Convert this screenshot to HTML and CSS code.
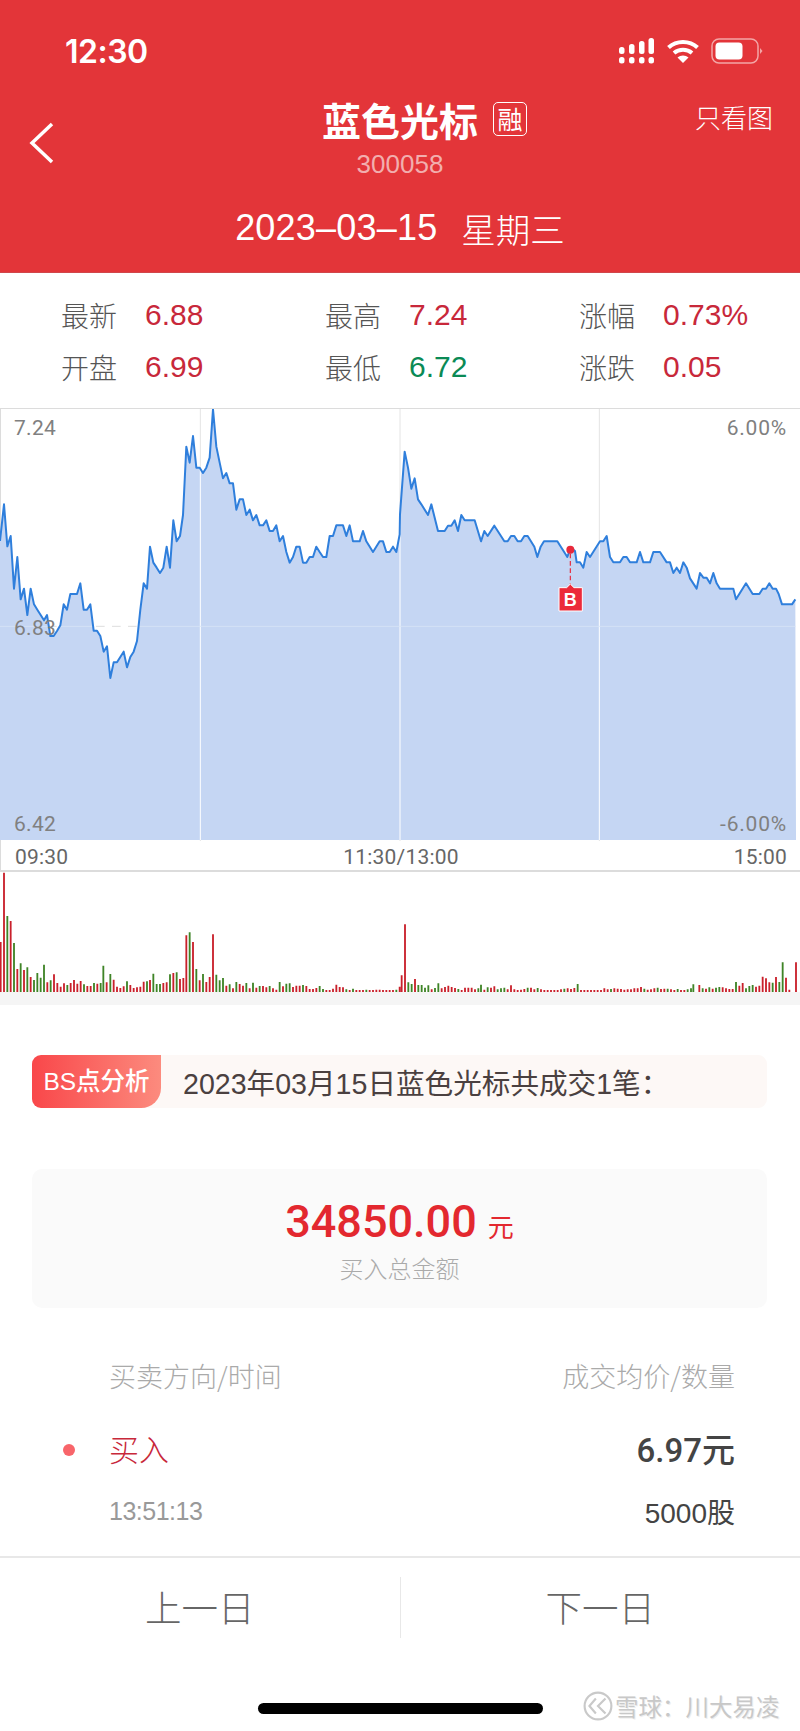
FILE: index.html
```html
<!DOCTYPE html>
<html lang="zh-CN">
	<head>
		<meta charset="utf8"/>
		<title>蓝色光标</title>
		<link rel="stylesheet" href="styles.css">
	</head>
	<body>
		<div class="page">
			<header class="top">
				<div class="status">
					<span class="clock">12:30</span>
					<div class="status-icons">
						<svg class="signal" width="36" height="26" viewBox="0 0 36 26" fill="#fff">
							<rect x="0" y="9" width="5.5" height="7" rx="2.5"/>
							<rect x="10" y="6" width="5.5" height="10" rx="2.5"/>
							<rect x="20" y="3" width="5.5" height="13" rx="2.5"/>
							<rect x="29.5" y="0" width="5.5" height="16" rx="2.5"/>
							<rect x="0" y="19" width="5.5" height="6.5" rx="2.5"/>
							<rect x="10" y="19" width="5.5" height="6.5" rx="2.5"/>
							<rect x="20" y="19" width="5.5" height="6.5" rx="2.5"/>
							<rect x="29.5" y="19" width="5.5" height="6.5" rx="2.5"/>
						</svg>
						<svg class="wifi" width="34" height="24" viewBox="0 0 34 24">
							<path d="M2.5 8.5C10.5 1 23.500 1 31.500 8.500" fill="none" stroke="#fff" stroke-width="4"/>
							<path d="M8 14C13 9.800 21 9.800 26 14" fill="none" stroke="#fff" stroke-width="4"/>
							<path d="M17 24L11.500 18.500C14.500 15.800 19.500 15.800 22.500 18.500Z" fill="#fff"/>
						</svg>
						<svg class="battery" width="52" height="26" viewBox="0 0 52 26">
							<rect x="1" y="1" width="46" height="24" rx="7" fill="none" stroke="#f3a6a6" stroke-width="1.500"/>
							<rect x="4.500" y="4.500" width="27" height="17" rx="4" fill="#fff"/>
							<path d="M49 10L51.500 13L49 16Z" fill="#f3a6a6"/>
						</svg>
					</div>
				</div>
				<div class="nav">
					<svg class="back" width="26" height="42" viewBox="0 0 26 42">
						<path d="M23 2L3 21L23 40" fill="none" stroke="#fff" stroke-width="3.500"/>
					</svg>
					<div class="name-box">
						<h1 class="name">蓝色光标<span class="tag">融</span></h1>
						<div class="code">300058</div>
					</div>
					<a class="chart-only">只看图</a>
				</div>
				<div class="date"><span class="day">2023–03–15</span><span class="week">星期三</span></div>
			</header>

			<div class="stats">
				<div class="stat"><span class="label">最新</span><span class="up">6.88</span></div>
				<div class="stat"><span class="label">最高</span><span class="up">7.24</span></div>
				<div class="stat"><span class="label">涨幅</span><span class="up">0.73%</span></div>
				<div class="stat"><span class="label">开盘</span><span class="up">6.99</span></div>
				<div class="stat"><span class="label">最低</span><span class="down">6.72</span></div>
				<div class="stat"><span class="label">涨跌</span><span class="up">0.05</span></div>
			</div>

			<div class="chart">
				<svg class="price" width="800" height="432" viewBox="0 24 2400 1296">
					<defs>
						<clipPath id="areaClip"><polygon points="0,1317 0,420 12,310 22,436 32,405 42,563 52,468 62,595 72,563 82,642 92,563 102,610 112,626 122,642 132,658 141,642 151,705 161,705 171,690 181,673 191,610 201,626 211,579 231,579 241,547 251,626 261,626 271,610 281,689 291,689 301,705 311,752 321,736 331,831 341,784 351,784 361,768 371,752 381,799 391,768 401,752 411,720 421,626 431,547 441,563 450,437 460,485 470,500 480,516 490,500 500,437 510,500 520,358 530,421 540,405 549,342 559,137 569,185 579,105 589,200 599,200 609,216 619,200 629,170 639,25 649,137 659,185 669,232 679,216 689,247 699,247 709,326 719,295 729,295 739,342 749,326 759,358 769,342 779,373 789,373 799,358 809,390 819,390 829,373 839,421 849,405 859,453 869,485 879,468 889,437 899,437 909,485 919,485 929,468 939,468 949,437 959,453 969,468 979,468 989,405 999,405 1009,373 1029,373 1039,405 1049,373 1059,421 1079,421 1089,390 1099,421 1119,453 1139,421 1149,421 1159,453 1169,453 1179,437 1189,453 1199,400 1200,340 1214,152 1224,200 1234,263 1244,232 1254,295 1264,310 1284,342 1294,310 1314,390 1334,390 1344,374 1354,374 1364,358 1374,390 1384,342 1394,358 1424,358 1443,421 1453,390 1463,405 1483,374 1513,421 1523,421 1533,405 1543,405 1553,421 1563,421 1573,405 1583,405 1603,437 1612,468 1622,437 1632,421 1672,421 1702,468 1712,440 1725,450 1730,484 1740,484 1750,500 1760,453 1770,468 1800,421 1810,421 1820,405 1830,468 1840,484 1860,484 1870,468 1880,468 1890,484 1910,484 1920,453 1930,484 1950,484 1960,453 1980,453 2000,484 2010,484 2020,516 2030,500 2040,516 2050,484 2060,500 2070,532 2090,563 2100,516 2110,530 2120,530 2130,547 2140,516 2150,547 2160,563 2200,563 2208,595 2238,547 2258,579 2278,579 2288,563 2298,563 2308,547 2318,563 2328,563 2336,579 2346,610 2376,610 2386,595 2388,1317"/></clipPath>
					</defs>
					<!-- grid on white -->
					<path d="M601 24V1320M1200 24V1320M1798 24V1320" stroke="#e4e4e4" stroke-width="3" fill="none"/>
					<path d="M0 676H2400" stroke="#d6d6d6" stroke-width="2.500" stroke-dasharray="26 22" fill="none"/>
					<rect class="area" x="0" y="0" width="2400" height="1320" clip-path="url(#areaClip)"/>
					<!-- grid on the blue area -->
					<g clip-path="url(#areaClip)">
						<path d="M601 24V1320M1200 24V1320M1798 24V1320" stroke="#fff" stroke-width="3" fill="none"/>
						<path d="M0 676H2400" stroke="#d9e4f7" stroke-width="2.500" fill="none"/>
					</g>
					<polyline class="line" points="0,420 12,310 22,436 32,405 42,563 52,468 62,595 72,563 82,642 92,563 102,610 112,626 122,642 132,658 141,642 151,705 161,705 171,690 181,673 191,610 201,626 211,579 231,579 241,547 251,626 261,626 271,610 281,689 291,689 301,705 311,752 321,736 331,831 341,784 351,784 361,768 371,752 381,799 391,768 401,752 411,720 421,626 431,547 441,563 450,437 460,485 470,500 480,516 490,500 500,437 510,500 520,358 530,421 540,405 549,342 559,137 569,185 579,105 589,200 599,200 609,216 619,200 629,170 639,25 649,137 659,185 669,232 679,216 689,247 699,247 709,326 719,295 729,295 739,342 749,326 759,358 769,342 779,373 789,373 799,358 809,390 819,390 829,373 839,421 849,405 859,453 869,485 879,468 889,437 899,437 909,485 919,485 929,468 939,468 949,437 959,453 969,468 979,468 989,405 999,405 1009,373 1029,373 1039,405 1049,373 1059,421 1079,421 1089,390 1099,421 1119,453 1139,421 1149,421 1159,453 1169,453 1179,437 1189,453 1199,400 1200,340 1214,152 1224,200 1234,263 1244,232 1254,295 1264,310 1284,342 1294,310 1314,390 1334,390 1344,374 1354,374 1364,358 1374,390 1384,342 1394,358 1424,358 1443,421 1453,390 1463,405 1483,374 1513,421 1523,421 1533,405 1543,405 1553,421 1563,421 1573,405 1583,405 1603,437 1612,468 1622,437 1632,421 1672,421 1702,468 1712,440 1725,450 1730,484 1740,484 1750,500 1760,453 1770,468 1800,421 1810,421 1820,405 1830,468 1840,484 1860,484 1870,468 1880,468 1890,484 1910,484 1920,453 1930,484 1950,484 1960,453 1980,453 2000,484 2010,484 2020,516 2030,500 2040,516 2050,484 2060,500 2070,532 2090,563 2100,516 2110,530 2120,530 2130,547 2140,516 2150,547 2160,563 2200,563 2208,595 2238,547 2258,579 2278,579 2288,563 2298,563 2308,547 2318,563 2328,563 2336,579 2346,610 2376,610 2386,595"/>
					<!-- buy marker -->
					<path d="M1711 458V548" stroke="#e8293b" stroke-width="3.500" stroke-dasharray="14 8" fill="none"/>
					<circle cx="1711" cy="446" r="12" fill="#e8293b"/>
					<path d="M1677 560H1700L1711 549L1722 560H1747V630H1677Z" fill="#ec2a3a" stroke="#fff" stroke-width="3"/>
					<text class="marker-text" x="1711" y="615" text-anchor="middle">B</text>
				</svg>
				<span class="axis axis-tl">7.24</span>
				<span class="axis axis-ml">6.83</span>
				<span class="axis axis-bl">6.42</span>
				<span class="axis axis-tr">6.00%</span>
				<span class="axis axis-br">-6.00%</span>
			</div>

			<div class="times">
				<span>09:30</span><span>11:30/13:00</span><span>15:00</span>
			</div>

			<svg class="volume" width="800" height="120" viewBox="0 156 2400 360">
				<path class="vol-up" d="M2 516V366M12 516V158M32 516V303M52 516V447M72 516V450M92 516V471M142 516V487M162 516V463M172 516V489M182 516V500M192 516V490M212 516V489M222 516V480M232 516V491M242 516V483M262 516V498M272 516V498M292 516V491M320 516V487M341 516V479M351 516V500M361 516V504M371 516V499M391 516V495M401 516V504M411 516V502M421 516V500M431 516V485M450 516V480M490 516V489M500 516V487M520 516V459M540 516V477M550 516V474M559 516V346M579 516V366M599 516V481M619 516V486M629 516V471M639 516V343M679 516V497M699 516V505M719 516V492M729 516V497M749 516V505M769 516V503M789 516V498M799 516V502M819 516V505M829 516V509M849 516V499M879 516V501M889 516V497M899 516V497M919 516V498M929 516V507M939 516V507M949 516V504M979 516V510M989 516V510M999 516V506M1009 516V494M1019 516V501M1029 516V502M1049 516V510M1069 516V510M1079 516V510M1089 516V510M1109 516V510M1119 516V510M1129 516V509M1139 516V509M1149 516V510M1159 516V510M1169 516V510M1179 516V510M1199 516V500M1205 516V466M1215 516V313M1245 516V477M1295 516V508M1325 516V505M1335 516V501M1345 516V497M1355 516V501M1365 516V504M1385 516V510M1395 516V503M1405 516V503M1415 516V503M1425 516V508M1453 516V509M1473 516V503M1483 516V499M1523 516V508M1533 516V496M1543 516V508M1553 516V510M1563 516V509M1573 516V507M1593 516V503M1603 516V508M1623 516V508M1633 516V510M1643 516V510M1653 516V510M1663 516V510M1673 516V510M1683 516V508M1703 516V505M1713 516V507M1723 516V504M1743 516V510M1753 516V510M1763 516V510M1773 516V510M1783 516V510M1793 516V510M1803 516V510M1813 516V505M1823 516V508M1843 516V505M1853 516V506M1863 516V507M1873 516V509M1883 516V508M1893 516V508M1903 516V505M1913 516V505M1923 516V501M1943 516V509M1953 516V508M1963 516V505M1983 516V507M1993 516V506M2013 516V508M2023 516V510M2043 516V510M2053 516V510M2098 516V495M2118 516V506M2138 516V506M2168 516V502M2178 516V505M2188 516V507M2198 516V507M2218 516V497M2228 516V489M2268 516V500M2278 516V497M2288 516V470M2298 516V475M2308 516V487M2328 516V471M2358 516V473M2368 516V509M2388 516V427"/>
				<path class="vol-down" d="M22 516V288M42 516V369M62 516V430M82 516V442M102 516V480M112 516V459M122 516V473M132 516V434M152 516V481M202 516V495M252 516V493M282 516V489M302 516V489M310 516V437M331 516V462M381 516V484M441 516V484M460 516V461M470 516V492M480 516V492M510 516V463M530 516V457M569 516V337M589 516V447M609 516V462M649 516V464M659 516V481M669 516V474M689 516V493M709 516V486M739 516V489M759 516V488M779 516V498M809 516V498M839 516V486M859 516V491M869 516V490M909 516V495M959 516V498M969 516V507M1039 516V508M1059 516V506M1099 516V509M1189 516V509M1225 516V487M1235 516V492M1255 516V495M1265 516V495M1275 516V503M1285 516V496M1305 516V504M1315 516V490M1375 516V507M1435 516V505M1443 516V494M1463 516V502M1493 516V508M1503 516V505M1513 516V503M1583 516V503M1613 516V504M1693 516V506M1733 516V492M1833 516V507M1933 516V506M1973 516V503M2003 516V506M2033 516V507M2063 516V508M2073 516V505M2080 516V493M2108 516V505M2128 516V502M2148 516V503M2158 516V501M2208 516V486M2238 516V505M2248 516V498M2258 516V495M2318 516V488M2338 516V486M2348 516V427"/>
			</svg>
			<div class="strip"></div>

			<div class="summary">
				<div class="badge">BS点分析</div>
				<div class="summary-text">2023年03月15日蓝色光标共成交1笔：</div>
			</div>

			<div class="total">
				<div class="amount"><span class="money">34850.00</span><span class="unit">元</span></div>
				<div class="total-label">买入总金额</div>
			</div>

			<div class="table">
				<div class="row row-head"><span>买卖方向/时间</span><span>成交均价/数量</span></div>
				<div class="row row-trade"><span class="side">买入</span><span class="avg">6.97元</span></div>
				<div class="row row-sub"><span class="when">13:51:13</span><span class="qty">5000股</span></div>
			</div>

			<div class="pager">
				<a class="pager-btn">上一日</a>
				<a class="pager-btn">下一日</a>
			</div>

			<div class="home-bar"></div>

			<div class="watermark">
				<svg width="30" height="30" viewBox="0 0 28 28" fill="none" stroke="#c9c9c9" stroke-width="2">
					<circle cx="14" cy="14" r="12.500"/>
					<path d="M12 7L6 14L12 21M21 7L14 14L21 21"/>
				</svg>
				<span>雪球：川大易凌</span>
			</div>
		</div>
	</body>
</html>
```

FILE: styles.css
```css
* {
	box-sizing : border-box;
}

html, body {
	margin     : 0;
	background : #fff;
}

.page {
	position    : relative;
	width       : 800px;
	height      : 1731px;
	overflow    : hidden;
	font-family : "Liberation Sans", "Noto Sans CJK SC", sans-serif;
}

/* red header */
.top {
	height        : 273px;
	background    : #e33539;
	border-bottom : 1px solid #d0474b;
	color         : #fff;
}

.status {
	display         : flex;
	justify-content : space-between;
	align-items     : center;
	height          : 92px;
	padding         : 10px 37px 0 65px;
}

.clock {
	font-family : Inter, sans-serif;
	font-size   : 32px;
	font-weight : 600;
	letter-spacing : -.5px;
}

.status-icons {
	display     : flex;
	align-items : center;
	gap         : 11px;
}

.nav {
	display               : grid;
	grid-template-columns : 1fr auto 1fr;
	height                : 92px;
}

.back {
	margin : 30px 0 0 29px;
}

.name-box {
	text-align : center;
}

.name {
	position    : relative;
	margin      : 0;
	font-size   : 39px;
	font-weight : 700;
	line-height : 54px;
	font-family : "Noto Sans CJK SC", sans-serif;
}

.tag {
	position    : absolute;
	top         : 10px;
	left        : 171px;
	width       : 34px;
	height      : 34px;
	border      : 1px solid #fff;
	border-radius : 5px;
	font-size   : 25px;
	font-weight : 400;
	line-height : 30px;
	text-align  : center;
}

.code {
	color       : #f2aeae;
	font-size   : 26px;
	line-height : 36px;
}

.chart-only {
	justify-self : end;
	margin-top   : 6px;
	padding-right : 27px;
	font-family  : "Noto Sans CJK SC", sans-serif;
	font-size    : 26px;
	font-weight  : 300;
	line-height  : 38px;
}

.date {
	display         : flex;
	justify-content : center;
	align-items     : center;
	gap             : 24px;
	height          : 88px;
	font-weight     : 400;
}

.day {
	font-size      : 36px;
	letter-spacing : .2px;
}

.week {
	font-family : "Noto Sans CJK SC", sans-serif;
	font-size   : 34.500px;
	font-weight : 300;
}

/* quote numbers */
.stats {
	display               : grid;
	grid-template-columns : 264px 254px 1fr;
	grid-auto-rows        : 52px;
	height                : 135px;
	padding               : 16px 0 0 61px;
}

.stat {
	display     : flex;
	align-items : center;
	font-size   : 30px;
}

.label {
	width       : 84px;
	color       : #555;
	font-family : "Noto Sans CJK SC", sans-serif;
	font-size   : 28px;
	font-weight : 300;
}

.up {
	color : #c8283a;
}

.down {
	color : #0a8a55;
}

/* time-share chart */
.chart {
	position    : relative;
	height      : 433px;
	border-top  : 1px solid #dcdcdc;
	border-left : 1px solid #dcdcdc;
}

.price {
	display : block;
	margin-left : -1px;
}

.area {
	fill : #c5d6f3;
}

.line {
	fill         : none;
	stroke       : #2f7fdc;
	stroke-width : 6;
	stroke-linejoin : round;
}

.marker-text {
	fill        : #fff;
	font-family : "Liberation Sans", sans-serif;
	font-size   : 54px;
	font-weight : 700;
}

.axis {
	position    : absolute;
	color       : #808080;
	font-family : Roboto, sans-serif;
	font-size   : 21px;
	line-height : 26px;
	letter-spacing : .3px;
}

.axis-tl { top : 6px;   left : 13px; }
.axis-ml { top : 206px; left : 13px; }
.axis-bl { top : 402px; left : 13px; }
.axis-tr { top : 6px;   right : 13px; letter-spacing : .8px; }
.axis-br { top : 402px; right : 13px; letter-spacing : .8px; }

.times {
	display         : flex;
	justify-content : space-between;
	height          : 31px;
	padding         : 0 13px 0 14px;
	border-left     : 1px solid #dcdcdc;
	border-bottom   : 2px solid #dcdcdc;
	color           : #666;
	font-family     : Roboto, sans-serif;
	font-size       : 21px;
	line-height     : 32px;
	letter-spacing  : .2px;
}

.volume {
	display : block;
}

.vol-up, .vol-down {
	fill         : none;
	stroke-width : 5.500;
}

.vol-up {
	stroke : #c9202b;
}

.vol-down {
	stroke : #3f8427;
}

.strip {
	height     : 13px;
	background : #f5f5f5;
}

/* BS summary */
.summary {
	display       : flex;
	align-items   : center;
	height        : 53px;
	margin        : 50px 33px 0 32px;
	background    : #fdf8f6;
	border-radius : 9px;
}

.badge {
	width         : 129px;
	height        : 53px;
	background    : linear-gradient(90deg, #f9474a, #fc8b7e);
	border-radius : 9px 0 20px 9px;
	color         : #fff;
	font-family   : "Liberation Sans", "Noto Sans CJK SC", sans-serif;
	font-size     : 24.500px;
	font-weight   : 500;
	line-height   : 53px;
	text-align    : center;
	white-space   : nowrap;
}

.summary-text {
	margin-left : 22px;
	color       : #4a4040;
	font-size   : 28.600px;
}

.total {
	height        : 139px;
	margin        : 61px 33px 0 32px;
	padding-top   : 28px;
	background    : #fafafa;
	border-radius : 10px;
	text-align    : center;
}

.amount {
	color       : #e3282f;
	line-height : 50px;
}

.money {
	font-family : Roboto, sans-serif;
	font-size   : 45px;
	font-weight : 500;
}

.unit {
	margin-left : 11px;
	font-family : "Noto Sans CJK SC", sans-serif;
	font-size   : 26px;
}

.total-label {
	margin-top  : -7px;
	color       : #aaa;
	font-family : "Noto Sans CJK SC", sans-serif;
	font-size   : 24px;
	font-weight : 300;
	line-height : 36px;
}

/* trade table */
.table {
	padding : 47px 65px 0 109px;
	height  : 250px;
	border-bottom : 2px solid #e8e8e8;
}

.row {
	display         : flex;
	justify-content : space-between;
	align-items     : center;
}

.row-head {
	height      : 40px;
	color       : #aaa;
	font-family : "Noto Sans CJK SC", sans-serif;
	font-size   : 27px;
	font-weight : 300;
}

.row-trade {
	height     : 76px;
	margin-top : 15px;
}

.side {
	position    : relative;
	color       : #c8283a;
	font-family : "Noto Sans CJK SC", sans-serif;
	font-size   : 30px;
	font-weight : 300;
}

.side::before {
	content       : "";
	position      : absolute;
	top           : 18px;
	left          : -46px;
	width         : 12px;
	height        : 12px;
	border-radius : 50%;
	background    : #f8656a;
}

.avg {
	color       : #444;
	font-family : Roboto, "Noto Sans CJK SC", sans-serif;
	font-size   : 33px;
	font-weight : 500;
}

.row-sub {
	height     : 46px;
	margin-top : 2px;
}

.when {
	color     : #999;
	font-size : 25px;
	letter-spacing : -.5px;
}

.qty {
	color     : #444;
	font-size : 28px;
}

/* prev / next */
.pager {
	display : flex;
	height  : 61px;
	margin-top : 19px;
}

.pager-btn {
	flex        : 1;
	color       : #666;
	font-family : "Noto Sans CJK SC", sans-serif;
	font-size   : 36.500px;
	font-weight : 300;
	line-height : 60px;
	text-align  : center;
}

.pager-btn + .pager-btn {
	border-left : 1px solid #e8e8e8;
}

.home-bar {
	width         : 285px;
	height        : 11px;
	margin        : 65px auto 0;
	background    : #000;
	border-radius : 6px;
}

.watermark {
	position    : absolute;
	top         : 1691px;
	left        : 583px;
	display     : flex;
	align-items : center;
	gap         : 2px;
	color       : #c8c8c8;
	font-family : "Noto Sans CJK SC", sans-serif;
	font-size   : 23.500px;
	line-height : 28px;
	text-shadow : 1px 1px 0 #eee;
}
```
